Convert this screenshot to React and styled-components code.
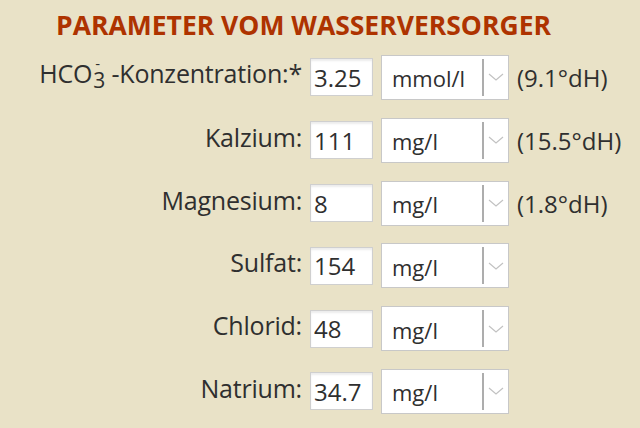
import React from 'react'
import styled, { createGlobalStyle } from 'styled-components'

const GlobalStyle = createGlobalStyle`
html, body {
  margin: 0;
  padding: 0;
  background: #e9e2c7;
}
body {
  font-family: 'Open Sans', 'DejaVu Sans', sans-serif;
  color: #2f2f2f;
}
`

const rows = [
    { key: 'hco3', value: '3.25', unit: 'mmol/l', hint: '(9.1°dH)' },
    { key: 'ca', label: 'Kalzium:', value: '111', unit: 'mg/l', hint: '(15.5°dH)' },
    { key: 'mg', label: 'Magnesium:', value: '8', unit: 'mg/l', hint: '(1.8°dH)' },
    { key: 'so4', label: 'Sulfat:', value: '154', unit: 'mg/l' },
    { key: 'cl', label: 'Chlorid:', value: '48', unit: 'mg/l' },
    { key: 'na', label: 'Natrium:', value: '34.7', unit: 'mg/l' },
]

const Chevron = () => (
    <svg width="16" height="8" viewBox="0 0 16 8">
        <path d="M1 1 L8 7 L15 1" fill="none" stroke="#c2c2c2" strokeWidth="1.2" />
    </svg>
)

const App = () => {
    return (
        <Page>
            <GlobalStyle />
            <Title>Parameter vom Wasserversorger</Title>
            <Form>
                {rows.map((row) => (
                    <React.Fragment key={row.key}>
                        <Label>
                            {row.label || (
                                <>
                                    HCO<Ion>3<Charge>-</Charge></Ion> -Konzentration:*
                                </>
                            )}
                        </Label>
                        <NumberInput type="text" defaultValue={row.value} />
                        <Select>
                            <Value>{row.unit}</Value>
                            <Arrow>
                                <Chevron />
                            </Arrow>
                        </Select>
                        <Hint>{row.hint}</Hint>
                    </React.Fragment>
                ))}
            </Form>
        </Page>
    )
}

const Page = styled.div`
width: 640px;
height: 428px;
overflow: hidden;
`
const Title = styled.h2`
margin: 7.6px 0 0 56px;
font-size: 26.5px;
line-height: 34px;
font-weight: 700;
text-transform: uppercase;
color: #ae3300;
`
const Form = styled.div`
display: grid;
grid-template-columns: 302px 63px 128px auto;
grid-auto-rows: 45px;
row-gap: 17.8px;
column-gap: 8px;
align-items: center;
margin-top: 13.4px;
`
const Label = styled.label`
text-align: right;
font-size: 25px;
line-height: 34px;
padding-bottom: 7px;
white-space: nowrap;
letter-spacing: -0.2px;
`
/* subscript 3 with the charge sign set above it */
const Ion = styled.span`
position: relative;
display: inline-block;
font-size: 21px;
line-height: 1;
vertical-align: -5px;
margin-left: 1px;
`
const Charge = styled.span`
position: absolute;
top: -12px;
left: 2px;
font-size: 15px;
line-height: 10px;
`
const NumberInput = styled.input`
box-sizing: border-box;
width: 63px;
height: 38px;
margin-left: 0;
padding: 0 3px;
border: 1px solid #cfcfcf;
background: #fff;
box-shadow: inset 0 2px 2px rgba(0,0,0,0.08);
font-family: 'Open Sans', 'DejaVu Sans', sans-serif;
font-size: 24px;
color: #2f2f2f;
outline: none;
`
const Select = styled.div`
box-sizing: border-box;
display: flex;
width: 128px;
height: 45px;
border: 1px solid #c8c8c8;
background: #fff;
`
const Value = styled.span`
flex: 1;
display: flex;
align-items: center;
padding-left: 10px;
padding-top: 2px;
font-size: 22px;
color: #2f2f2f;
`
const Arrow = styled.span`
display: flex;
align-items: center;
justify-content: center;
width: 24px;
margin: 3px 0;
border-left: 2px solid #adadad;
`
const Hint = styled.span`
font-size: 24px;
white-space: nowrap;
`

export default App
